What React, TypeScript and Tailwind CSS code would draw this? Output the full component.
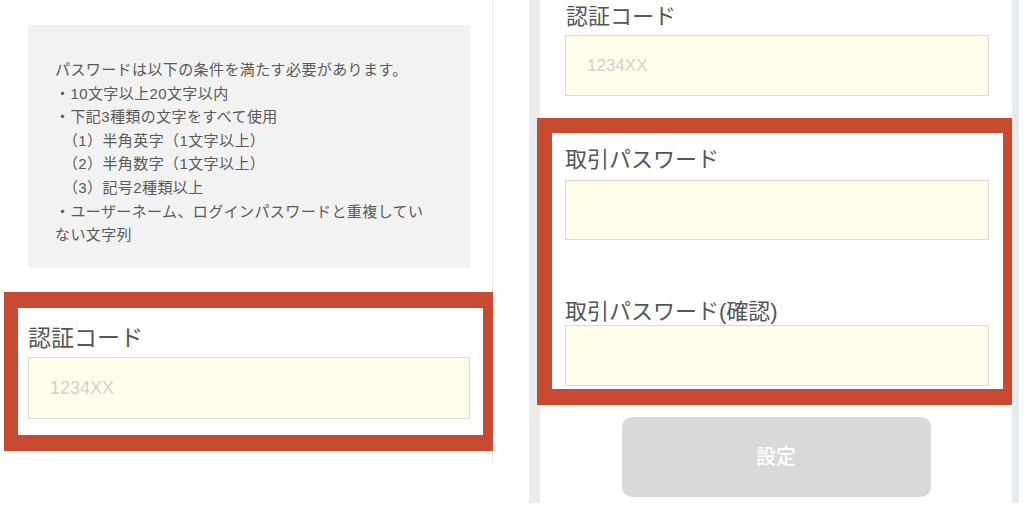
import React from 'react';

const rules = [
    'パスワードは以下の条件を満たす必要があります。',
    '・10文字以上20文字以内',
    '・下記3種類の文字をすべて使用',
    '　（1）半角英字（1文字以上）',
    '　（2）半角数字（1文字以上）',
    '　（3）記号2種類以上',
    '・ユーザーネーム、ログインパスワードと重複してい',
    'ない文字列',
];

const inputClass =
    'block bg-[#fffce9] border border-[#dedcd0] outline-none pl-[21px] text-[#555] placeholder:text-[#d2d2d2]';

const App: React.FC = () => {
    return (
        <div className="w-[1024px] h-[511px] bg-white flex items-start overflow-hidden font-['Liberation_Sans','Noto_Sans_CJK_JP',sans-serif] text-[#555555]">
            {/* left screen */}
            <div className="w-[493px] h-[462px] shrink-0 border-r border-[#e8e8e8]">
                <div className="ml-[28px] mt-[25px] w-[442px] h-[243px] bg-[#f2f2f2] pl-[27px] pt-[33px] text-[15px] leading-[23.6px] tracking-[0.4px] text-[#595959]">
                    {rules.map((line) => (
                        <div key={line} className="whitespace-pre">{line}</div>
                    ))}
                </div>

                <div className="ml-[4px] mt-[24px] w-[489px] h-[159px] border-solid border-[#c94a33] border-t-[16px] border-l-[14px] border-r-[10px] border-b-[16px] bg-white pl-[10px] pt-[17px]">
                    <div className="text-[23px] leading-[26px] mb-[6px]">認証コード</div>
                    <input
                        readOnly
                        placeholder="1234XX"
                        className={`${inputClass} w-[442px] h-[62px] text-[18px]`}
                    />
                </div>
            </div>

            <div className="w-[36px] shrink-0" />

            {/* right screen */}
            <div className="flex h-[503px] shrink-0">
                <div className="w-[11px] bg-[#ececec]" />
                <div className="w-[472px] flex flex-col">
                    <div className="pl-[26px] pt-[4px] text-[22px] leading-[26px] mb-[5px]">認証コード</div>
                    <input
                        readOnly
                        placeholder="1234XX"
                        className={`${inputClass} ml-[25px] w-[424px] h-[61px] text-[17px]`}
                    />

                    <div className="-mx-[3px] mt-[22px] h-[287px] border-solid border-[#c94a33] border-t-[15px] border-l-[15px] border-r-[12px] border-b-[16px] bg-white pl-[13px] pt-[14px]">
                        <div className="text-[22px] leading-[26px] mb-[7px]">取引パスワード</div>
                        <input readOnly className={`${inputClass} w-[424px] h-[60px]`} />
                        <div className="mt-[59px] text-[22px] leading-[26px]">取引パスワード(確認)</div>
                        <input readOnly className={`${inputClass} w-[424px] h-[61px]`} />
                    </div>

                    <button className="mt-[12px] mx-auto w-[309px] h-[80px] rounded-[10px] bg-[#d9d9d9] text-white text-[20px] font-medium">
                        設定
                    </button>
                </div>
                <div className="w-[7px] bg-[#e4ecf0]" />
            </div>
        </div>
    );
};

export default App;
